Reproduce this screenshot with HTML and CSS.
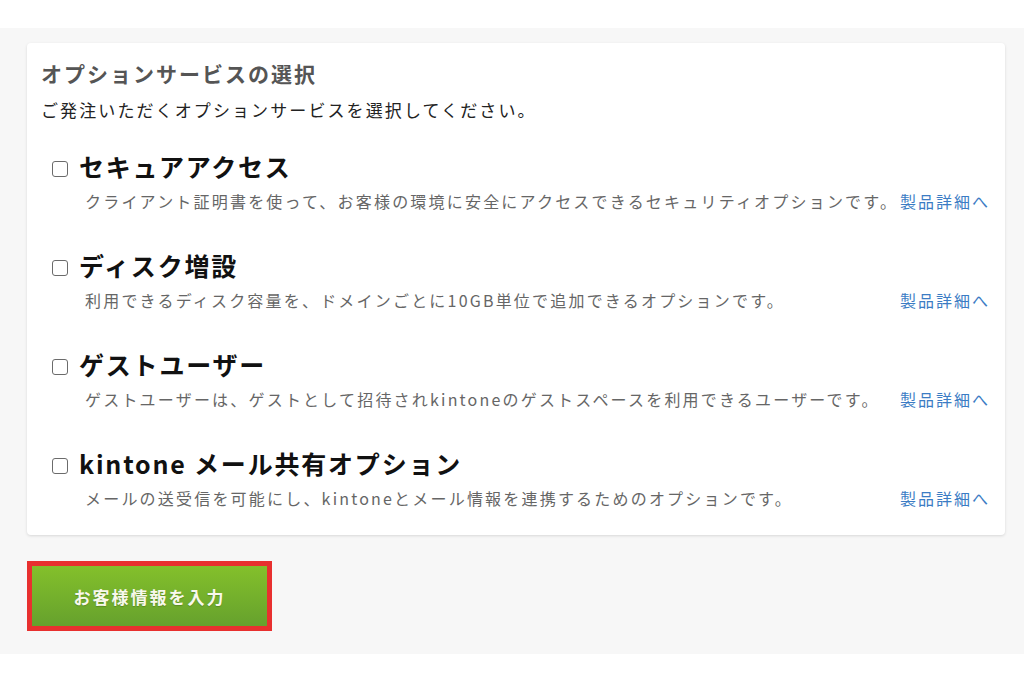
FILE: index.html
```html
<!DOCTYPE html>
<html lang="ja">
<head>
<meta charset="utf-8">
<title>オプションサービスの選択</title>
<link rel="stylesheet" href="styles.css">
</head>
<body>
<div class="page">
  <section class="band">
    <div class="card">
      <h2 class="card-title">オプションサービスの選択</h2>
      <p class="card-lead">ご発注いただくオプションサービスを選択してください。</p>
      <ul class="options">
        <li class="option">
          <label class="option-head"><input type="checkbox" class="check"><span class="option-name">セキュアアクセス</span></label>
          <div class="option-body"><span class="option-desc">クライアント証明書を使って、お客様の環境に安全にアクセスできるセキュリティオプションです。</span><a class="option-link" href="#">製品詳細へ</a></div>
        </li>
        <li class="option">
          <label class="option-head"><input type="checkbox" class="check"><span class="option-name">ディスク増設</span></label>
          <div class="option-body"><span class="option-desc">利用できるディスク容量を、ドメインごとに10GB単位で追加できるオプションです。</span><a class="option-link" href="#">製品詳細へ</a></div>
        </li>
        <li class="option">
          <label class="option-head"><input type="checkbox" class="check"><span class="option-name">ゲストユーザー</span></label>
          <div class="option-body"><span class="option-desc">ゲストユーザーは、ゲストとして招待されkintoneのゲストスペースを利用できるユーザーです。</span><a class="option-link" href="#">製品詳細へ</a></div>
        </li>
        <li class="option">
          <label class="option-head"><input type="checkbox" class="check"><span class="option-name">kintone メール共有オプション</span></label>
          <div class="option-body"><span class="option-desc">メールの送受信を可能にし、kintoneとメール情報を連携するためのオプションです。</span><a class="option-link" href="#">製品詳細へ</a></div>
        </li>
      </ul>
    </div>
    <div class="actions">
      <button class="btn-next" type="button">お客様情報を入力</button>
    </div>
  </section>
</div>
</body>
</html>
```

FILE: styles.css
```css
* { box-sizing: border-box; }
html, body { margin: 0; padding: 0; background: #ffffff; }
body {
  font-family: "Noto Sans CJK JP", "Noto Sans", sans-serif;
  color: #333;
  width: 1024px;
  height: 683px;
  overflow: hidden;
}
.page { padding-top: 28px; }
.band {
  background: #f7f7f7;
  padding: 15px 19px 23px 27px;
}
.card {
  background: #fff;
  border-radius: 4px;
  box-shadow: 0 1px 3px rgba(0,0,0,0.13);
  padding: 15px 15px 24px 14px;
}
.card-title {
  margin: 0;
  font-size: 21px;
  line-height: 30px;
  font-weight: 700;
  color: #555;
  letter-spacing: 2px;
}
.card-lead {
  margin: 9px 0 0;
  font-size: 17px;
  line-height: 26px;
  color: #222;
  letter-spacing: 2.1px;
}
.options {
  list-style: none;
  margin: 0;
  padding: 0 0 0 11px;
}
.option { margin-top: 25px; }
.option + .option { margin-top: 33px; }
.option-head {
  display: flex;
  align-items: center;
  gap: 11px;
  height: 36px;
}
.check {
  appearance: none;
  -webkit-appearance: none;
  margin: 6px 0 0 0;
  width: 16px;
  height: 16px;
  border: 1.5px solid #6b6b6b;
  border-radius: 3px;
  background: #fff;
  flex: none;
}
.option-name {
  font-size: 25px;
  line-height: 36px;
  font-weight: 700;
  color: #111;
  letter-spacing: 1.8px;
}
.option-body {
  display: flex;
  justify-content: space-between;
  align-items: center;
  margin-top: 4px;
  padding-left: 33px;
  height: 26px;
}
.option-desc {
  font-size: 16px;
  line-height: 26px;
  color: #666;
  letter-spacing: 2.2px;
  white-space: nowrap;
}
.option-link {
  font-size: 16px;
  line-height: 26px;
  color: #3b7cc4;
  text-decoration: none;
  letter-spacing: 2px;
  white-space: nowrap;
}
.actions { margin-top: 26px; display: flex; }
.btn-next {
  width: 245px;
  height: 70px;
  border: 5px solid #e8302f;
  background: linear-gradient(#84c02b, #66a12d);
  color: #f8f8ec;
  font-family: "Noto Sans CJK JP", sans-serif;
  font-size: 17px;
  font-weight: 700;
  letter-spacing: 2px;
  text-shadow: 0 1px 1px rgba(0,0,0,0.2);
  padding: 0;
  cursor: pointer;
}
```
